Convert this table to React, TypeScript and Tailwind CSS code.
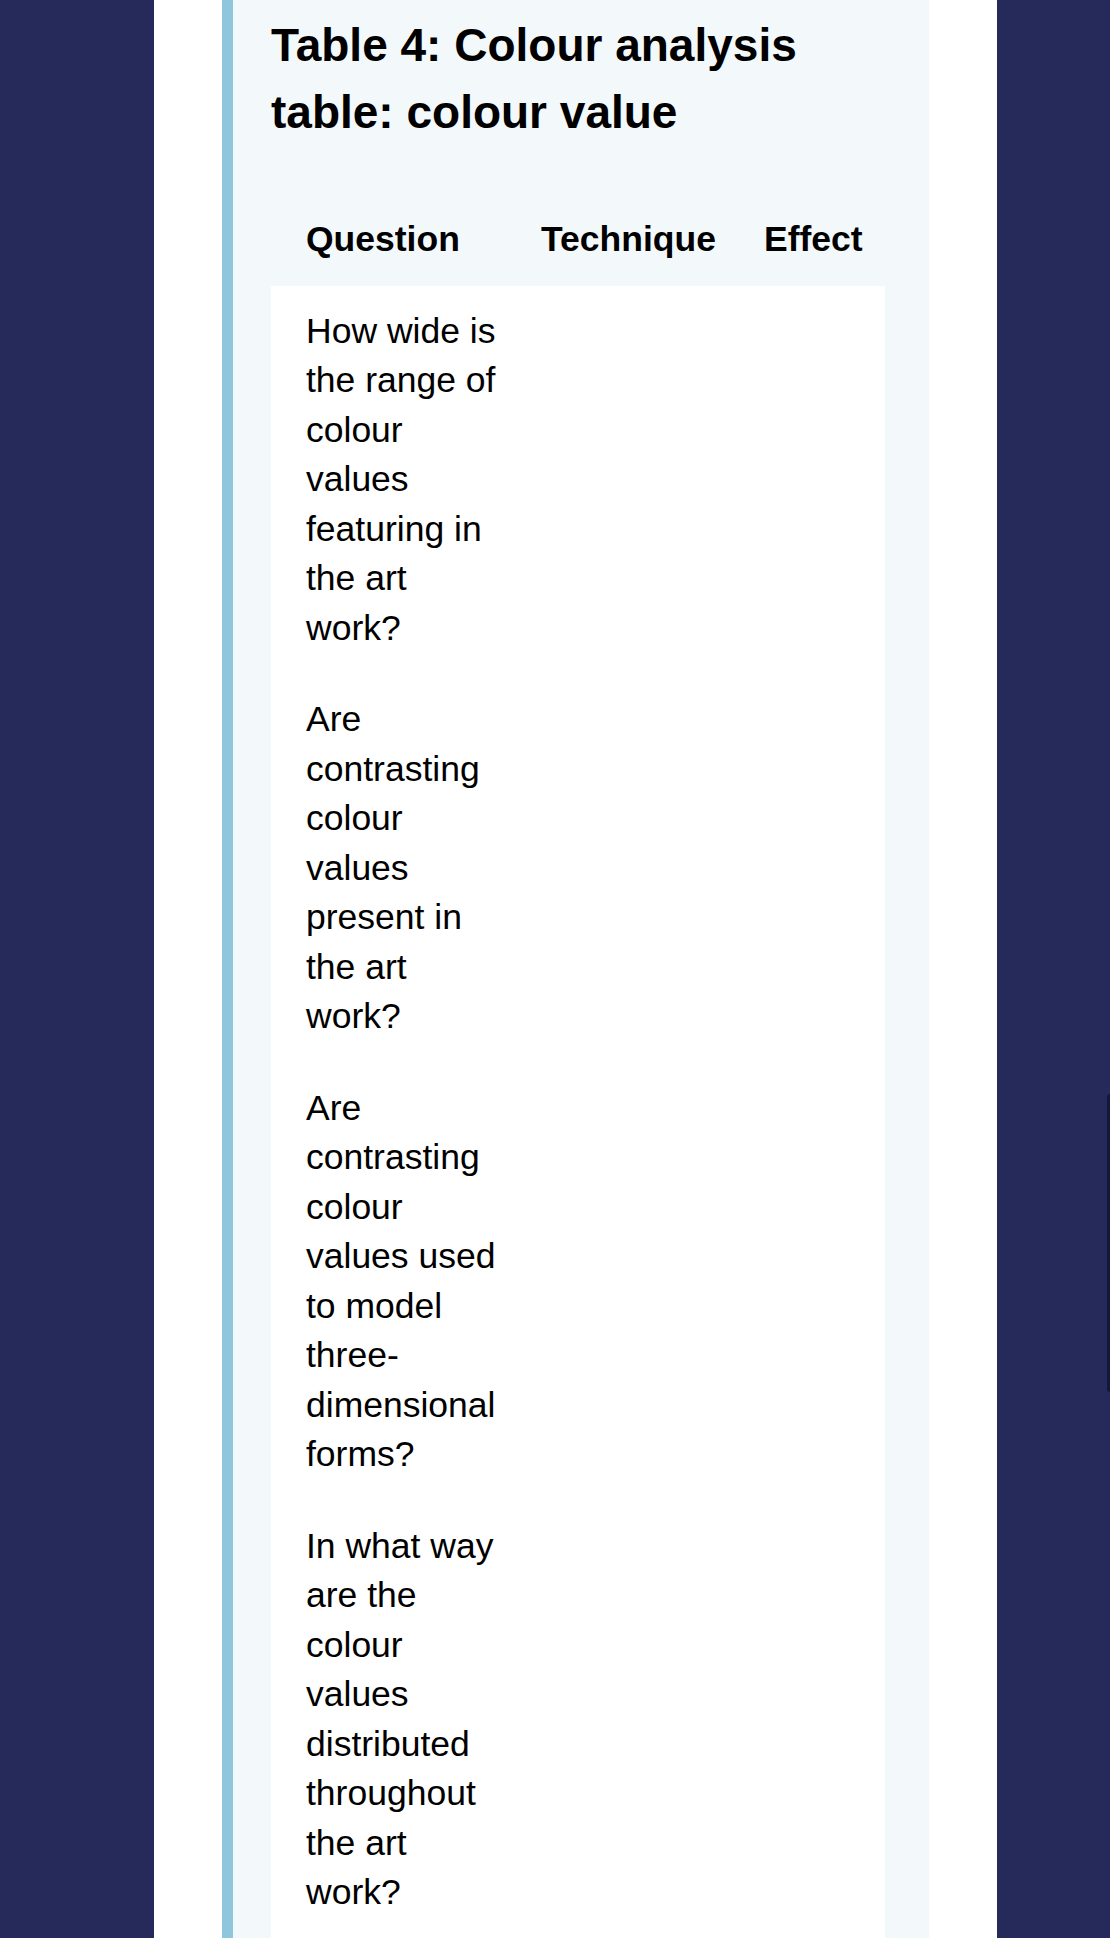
const rows = [
  'How wide is the range of colour values featuring in the art work?',
  'Are contrasting colour values present in the art work?',
  'Are contrasting colour values used to model three-dimensional forms?',
  'In what way are the colour values distributed throughout the art work?',
]

export default function App() {
  return (
    <div className="relative h-[1938px] overflow-hidden bg-[#262a5a] font-['Liberation_Sans',Arial,sans-serif] text-black">
      {/* Page column */}
      <div className="ml-[154px] h-full w-[843px] bg-white px-[68px]">
        {/* Table panel */}
        <div className="h-full border-l-[11px] border-[#8fc6de] bg-[#f3f8fb] pl-[38px] pr-[44px] pt-[12px]">
          <h2 className="mb-[48px] text-[46px] font-bold leading-[67px]">
            Table 4: Colour analysis
            <br />
            table: colour value
          </h2>

          <div className="w-[614px]">
            {/* Header */}
            <div className="grid grid-cols-[235px_223px_156px] text-[35.5px] font-bold leading-[49.5px]">
              <div className="py-[21px] pl-[35px]">Question</div>
              <div className="py-[21px] pl-[35px]">Technique</div>
              <div className="py-[21px] pl-[35px]">Effect</div>
            </div>

            {/* Body */}
            <div className="bg-white">
              {rows.map((q) => (
                <div
                  key={q}
                  className="grid grid-cols-[235px_223px_156px] text-[35.5px] leading-[49.5px]"
                >
                  <div className="py-[21px] pl-[35px]">{q}</div>
                  <div className="py-[21px] pl-[35px]"></div>
                  <div className="py-[21px] pl-[35px]"></div>
                </div>
              ))}
            </div>
          </div>
        </div>
      </div>

      {/* Scrollbar thumb */}
      <div className="absolute right-0 top-[1094px] h-[298px] w-[3px] rounded-l-sm bg-[#15173a]" />
    </div>
  )
}
